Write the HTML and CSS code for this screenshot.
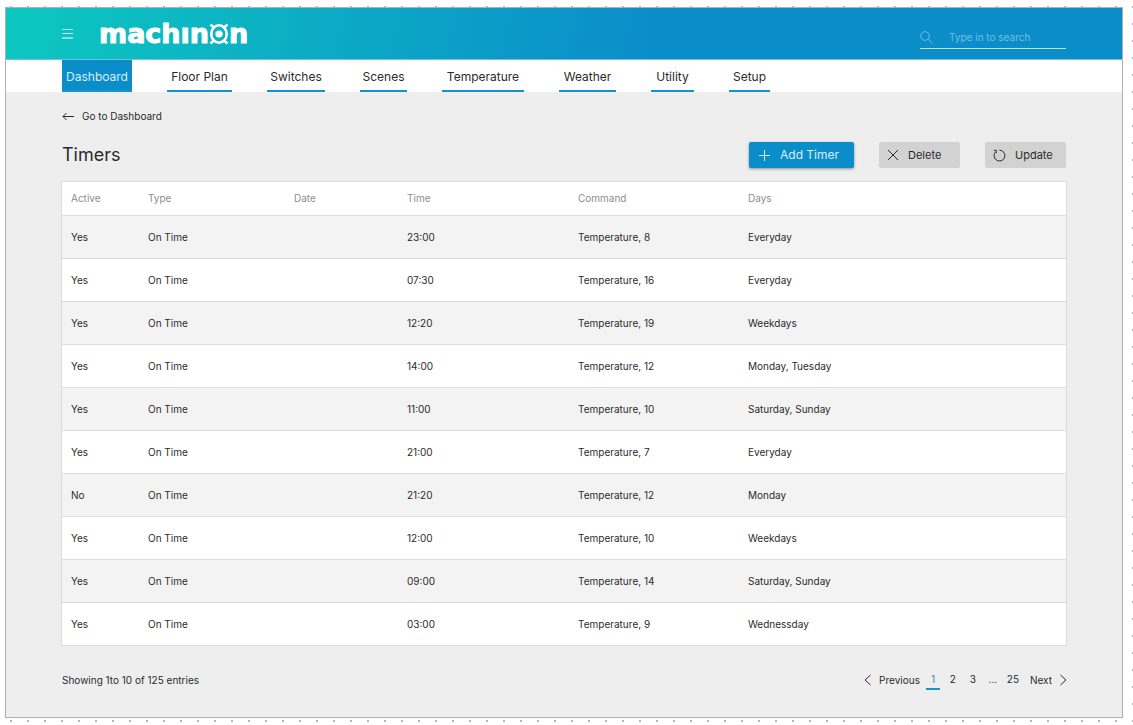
FILE: index.html
```html
<!DOCTYPE html>
<html lang="en">
<head>
<meta charset="utf-8">
<meta name="viewport" content="width=device-width, initial-scale=1">
<title>Machinon - Timers</title>
<link rel="stylesheet" href="styles.css">
</head>
<body>
<div class="app">
  <header class="topbar">
    <button class="menu" type="button" aria-label="Menu"><svg width="12" height="11" viewBox="0 0 12 11"><path d="M0 1.500h11M0 5.500h11" opacity=".7"/><path d="M0 10h11"/></svg></button>
    <a class="brand" href="#" aria-label="machinon">
      <span>machın</span>
      <svg class="gear" width="20" height="22" viewBox="0 0 20 22">
        <ellipse cx="10" cy="11" rx="7.700" ry="8.700" fill="none" stroke="#fff" stroke-width="2.600"/>
        <path d="M1.500 1.500l3.500 3M18.500 1.500l-3.500 3M1.500 20.500l3.500-3M18.500 20.500l-3.500-3" stroke="#fff" stroke-width="2.600"/>
        <circle cx="10" cy="11" r="3.600" fill="#fff"/>
        <path d="M10 11h3.600" stroke="#fff" stroke-width="2"/>
      </svg>
      <span>n</span>
    </a>
    <label class="search">
      <svg width="13" height="13" viewBox="0 0 13 13"><circle cx="5" cy="5" r="4.300"/><path d="M8.200 8.200l4.200 4.200"/></svg>
      <input type="search" placeholder="Type in to search" aria-label="Search">
    </label>
  </header>
  <nav class="tabs">
    <a class="tab active" href="#">Dashboard</a>
    <a class="tab" href="#">Floor Plan</a>
    <a class="tab" href="#">Switches</a>
    <a class="tab" href="#">Scenes</a>
    <a class="tab" href="#">Temperature</a>
    <a class="tab" href="#">Weather</a>
    <a class="tab" href="#">Utility</a>
    <a class="tab" href="#">Setup</a>
  </nav>
  <main class="content">
    <a class="back" href="#"><svg width="12" height="9" viewBox="0 0 12 9"><path d="M12 4.500H1M4.500 1L1 4.500L4.500 8"/></svg>Go to Dashboard</a>
    <div class="heading">
      <h1>Timers</h1>
      <div class="actions">
        <button class="btn primary" type="button"><svg width="12" height="12" viewBox="0 0 12 12"><path d="M0 6.500h11M5.500 1v11"/></svg>Add Timer</button>
        <button class="btn" type="button"><svg width="12" height="12" viewBox="0 0 12 12"><path d="M1 1l10 10M11 1L1 11"/></svg>Delete</button>
        <button class="btn" type="button"><svg width="13" height="13" viewBox="0 0 13 13"><path d="M6.500 1.200A5.400 5.400 0 1 1 2.300 3.200M.8 1.500L3.200 1.200L3.400 4"/></svg>Update</button>
      </div>
    </div>
    <table class="timers">
      <colgroup><col class="c-active"><col class="c-type"><col class="c-date"><col class="c-time"><col class="c-command"><col></colgroup>
      <thead><tr><th>Active</th><th>Type</th><th>Date</th><th>Time</th><th>Command</th><th>Days</th></tr></thead>
      <tbody>
        <tr><td>Yes</td><td>On Time</td><td></td><td>23:00</td><td>Temperature, 8</td><td>Everyday</td></tr>
        <tr><td>Yes</td><td>On Time</td><td></td><td>07:30</td><td>Temperature, 16</td><td>Everyday</td></tr>
        <tr><td>Yes</td><td>On Time</td><td></td><td>12:20</td><td>Temperature, 19</td><td>Weekdays</td></tr>
        <tr><td>Yes</td><td>On Time</td><td></td><td>14:00</td><td>Temperature, 12</td><td>Monday, Tuesday</td></tr>
        <tr><td>Yes</td><td>On Time</td><td></td><td>11:00</td><td>Temperature, 10</td><td>Saturday, Sunday</td></tr>
        <tr><td>Yes</td><td>On Time</td><td></td><td>21:00</td><td>Temperature, 7</td><td>Everyday</td></tr>
        <tr><td>No</td><td>On Time</td><td></td><td>21:20</td><td>Temperature, 12</td><td>Monday</td></tr>
        <tr><td>Yes</td><td>On Time</td><td></td><td>12:00</td><td>Temperature, 10</td><td>Weekdays</td></tr>
        <tr><td>Yes</td><td>On Time</td><td></td><td>09:00</td><td>Temperature, 14</td><td>Saturday, Sunday</td></tr>
        <tr><td>Yes</td><td>On Time</td><td></td><td>03:00</td><td>Temperature, 9</td><td>Wednessday</td></tr>
      </tbody>
    </table>
    <footer class="footer">
      <span>Showing 1to 10 of 125 entries</span>
      <nav class="pager" aria-label="Pages">
        <a class="step" href="#"><svg width="7" height="12" viewBox="0 0 7 12"><path d="M6.500 1L1 6l5.500 5"/></svg>Previous</a>
        <a class="page current" href="#">1</a>
        <a class="page" href="#">2</a>
        <a class="page" href="#">3</a>
        <span class="page">...</span>
        <a class="page" href="#">25</a>
        <a class="step next" href="#">Next<svg width="7" height="12" viewBox="0 0 7 12"><path d="M.5 1L6 6L.5 11"/></svg></a>
      </nav>
    </footer>
  </main>
</div>
</body>
</html>
```

FILE: styles.css
```css
* { box-sizing: border-box; }

body {
  margin: 0;
  padding: 7px 10px 7px 5px;
  min-height: 100vh;
  display: flex;
  font-family: Inter, "Liberation Sans", sans-serif;
  font-size: 10px;
  line-height: 14px;
  color: #2b2b2b;
  background: conic-gradient(from 270deg at 2px 2px, #b9b4b5 90deg, #fff 0) 10px 6px / 17px 17px;
}

a { color: inherit; text-decoration: none; }
button, input { font: inherit; color: inherit; }
svg { flex: none; fill: none; stroke: currentColor; stroke-width: 1; }

.app {
  flex: 1;
  display: flex;
  flex-direction: column;
  border: 1px solid #b5acae;
  background: #eee;
}

.topbar {
  display: flex;
  align-items: center;
  height: 52px;
  padding: 0 56px;
  color: #fff;
  border-bottom: 1px solid #6fc0e2;
  background: linear-gradient(100deg, #0cc7c0 1%, #0b8dca 58%) border-box;
}

.menu { display: flex; padding: 0; border: 0; background: none; cursor: pointer; }

.brand {
  display: flex;
  align-items: center;
  margin-left: 25px;
  font: bold 27px/30px "DejaVu Sans", sans-serif;
  -webkit-text-stroke: 1px #fff;
}
.gear { stroke: none; }

.search {
  display: flex;
  align-items: center;
  gap: 16px;
  width: 146px;
  height: 22px;
  margin-left: auto;
  margin-top: 8px;
  border-bottom: 1px solid #c4e1f1;
  color: #75bde1;
}
.search input {
  flex: 1;
  min-width: 0;
  padding: 0;
  border: 0;
  outline: 0;
  background: none;
}
.search input::placeholder { color: #75bde1; opacity: 1; }

.tabs {
  display: grid;
  grid-template-columns: 70px 65px 58px 47px 82px 57px 43px 41px;
  column-gap: 35px;
  padding: 0 56px;
  background: #fff;
  font-size: 12px;
}
.tab {
  height: 32px;
  line-height: 33px;
  text-align: center;
  white-space: nowrap;
  border-bottom: 2px solid #1492cd;
}
.active { background: #0b8dca; color: #d9eef8; }

.content { padding: 17px 55px 26px; }

.back { display: flex; align-items: center; gap: 8px; width: max-content; margin-left: 1px; }

.heading {
  display: flex;
  justify-content: space-between;
  align-items: center;
  margin-top: 19px;
  padding-left: 1px;
}
h1 { margin: 0; font-size: 18px; line-height: 26px; font-weight: 400; }
.actions { display: flex; gap: 25px; padding-right: 1px; }
.btn {
  display: flex;
  align-items: center;
  gap: 9px;
  width: 81px;
  height: 26px;
  padding: 0 8px;
  border: 0;
  border-radius: 2px;
  background: #d2d2d2;
  font-size: 11px;
  white-space: nowrap;
  cursor: pointer;
}
.primary {
  width: 105px;
  padding: 0 10px;
  font-size: 12px;
  color: #d9eef8;
  background: #0b8dca;
  box-shadow: 0 1px 3px rgba(0, 0, 0, .4);
}

.timers {
  width: 100%;
  margin-top: 13px;
  table-layout: fixed;
  border-spacing: 0;
  border: 1px solid #dcdcdc;
  border-bottom: 0;
}
.c-active { width: 77px; }
.c-type { width: 146px; }
.c-date { width: 113px; }
.c-time { width: 171px; }
.c-command { width: 170px; }
.timers th, .timers td {
  height: 43px;
  padding: 0 0 0 9px;
  text-align: left;
  border-bottom: 1px solid #dcdcdc;
}
.timers th { height: 34px; padding-bottom: 2px; font-weight: 400; color: #8d8d8d; }
.timers tbody tr { background: #fff; }
.timers tbody tr:nth-child(odd) { background: #f3f3f3; }
.timers thead { background: #fff; }

.footer {
  display: flex;
  justify-content: space-between;
  align-items: center;
  margin-top: 23px;
  padding-left: 1px;
}
.pager { display: flex; align-items: center; gap: 6px; }
.step { display: flex; align-items: center; gap: 8px; }
.next { margin-left: 4px; }
.page { min-width: 14px; padding: 3px 0 2px; text-align: center; border-bottom: 2px solid transparent; }
.current { color: #1492cd; border-color: #1492cd; }
```
